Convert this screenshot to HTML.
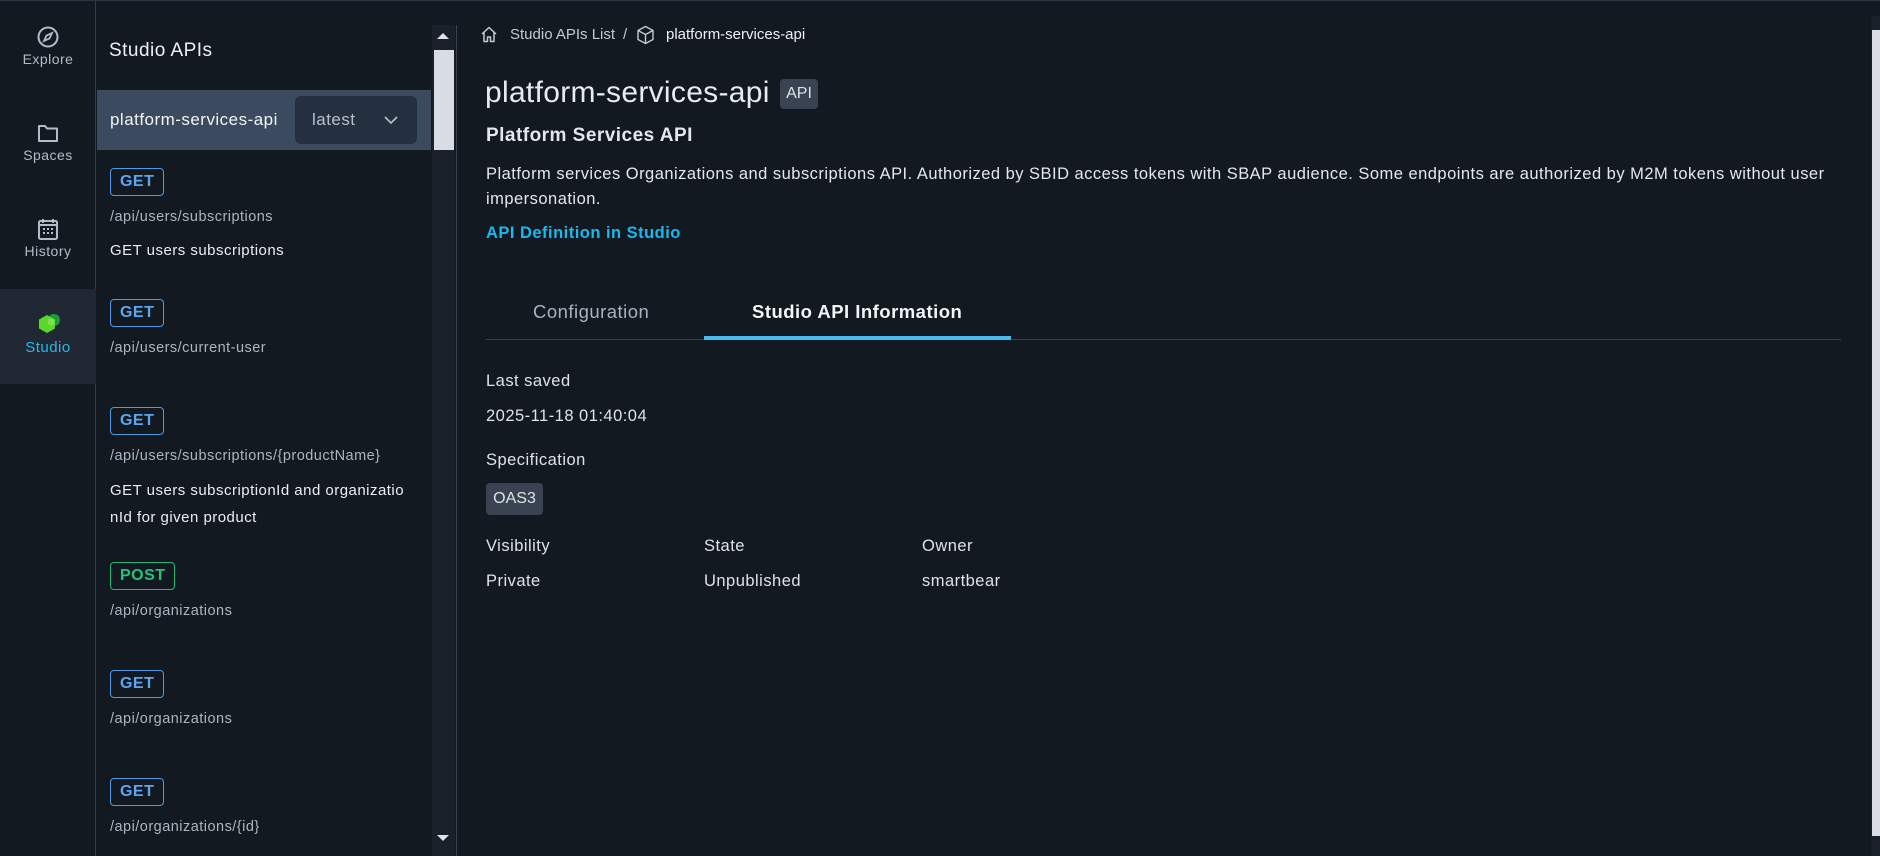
<!DOCTYPE html>
<html><head><meta charset="utf-8"><style>
*{box-sizing:border-box;margin:0;padding:0}
body{width:1880px;height:856px;overflow:hidden;background:#131920;font-family:"Liberation Sans",sans-serif;color:#e4e7eb;position:relative;letter-spacing:0.03em}
.a{position:absolute;white-space:nowrap}
.nav{left:0;top:1px;width:96px;height:855px;border-right:1px solid #343c47}
.ni{position:absolute;left:0;width:96px;text-align:center;font-size:14px;color:#b4bcc8}
.badge{position:absolute;left:110px;height:28px;border:1.5px solid #4d9be6;border-radius:4px;color:#5ba6ef;font-weight:bold;font-size:16px;line-height:25px;padding:0 9px}
.path{position:absolute;left:110px;font-size:14.5px;color:#aeb5bf}
.desc{position:absolute;left:110px;font-size:15px;color:#eceef1;line-height:27px}
.lbl{position:absolute;font-size:16.5px;color:#dfe3e8}
</style></head><body>
<div class="a" style="left:0;top:0;width:1880px;height:1px;background:#2e3540"></div>
<div class="a nav"></div>
<svg class="a" style="left:37px;top:26px" width="22" height="22" viewBox="0 0 22 22"><circle cx="11" cy="11" r="9.5" fill="none" stroke="#b4bcc8" stroke-width="2"/><path d="M15 7 L12.5 12.5 L7 15 L9.5 9.5Z" fill="none" stroke="#b4bcc8" stroke-width="1.8"/></svg>
<div class="ni" style="top:51px">Explore</div>
<svg class="a" style="left:37px;top:123px" width="22" height="20" viewBox="0 0 22 20"><path d="M2 3 H8 L10 5.5 H20 V18 H2Z" fill="none" stroke="#b4bcc8" stroke-width="2" stroke-linejoin="round"/></svg>
<div class="ni" style="top:147px">Spaces</div>
<svg class="a" style="left:38px;top:218px" width="20" height="22" viewBox="0 0 20 22"><rect x="1" y="3" width="18" height="18" rx="1.5" fill="none" stroke="#b4bcc8" stroke-width="2"/><path d="M5 1v4M15 1v4M1 7h18" stroke="#b4bcc8" stroke-width="2"/><g fill="#b4bcc8"><rect x="5" y="10" width="2" height="2"/><rect x="9" y="10" width="2" height="2"/><rect x="13" y="10" width="2" height="2"/><rect x="5" y="14" width="2" height="2"/><rect x="9" y="14" width="2" height="2"/><rect x="13" y="14" width="2" height="2"/></g></svg>
<div class="ni" style="top:243px">History</div>
<div class="a" style="left:0;top:289px;width:96px;height:95px;background:#1f2833"></div>
<svg class="a" style="left:35px;top:312px" width="26" height="26" viewBox="0 0 26 26"><circle cx="19" cy="8" r="6" fill="#1a9c3a"/><path d="M12 3 L20 7.5 V16.5 L12 21 L4 16.5 V7.5Z" fill="#5bd62a"/><circle cx="16" cy="10" r="3.5" fill="#8fe65a" opacity=".7"/></svg>
<div class="ni" style="top:339px;color:#2cb5ee;font-size:15px">Studio</div>

<div class="a" style="left:109px;top:40px;font-size:19px;color:#eef0f3">Studio APIs</div>
<div class="a" style="left:97px;top:90px;width:334px;height:60px;background:#3b4a5f"></div>
<div class="a" style="left:110px;top:110px;font-size:17px;color:#f2f4f6">platform-services-api</div>
<div class="a" style="left:295px;top:96px;width:122px;height:48px;background:#243040;border-radius:6px"></div>
<div class="a" style="left:312px;top:110px;font-size:17px;color:#b8c0cb">latest</div>
<svg class="a" style="left:384px;top:115px" width="14" height="10" viewBox="0 0 14 10"><path d="M1 2 L7 8 L13 2" fill="none" stroke="#b8c0cb" stroke-width="1.6"/></svg>
<div class="a" style="left:432px;top:25px;width:23px;height:831px;background:#1a2029"></div>
<div class="a" style="left:434px;top:50px;width:20px;height:100px;background:#d9dde3"></div>
<div class="a" style="left:437px;top:33px;width:0;height:0;border-left:6px solid transparent;border-right:6px solid transparent;border-bottom:6px solid #e0e3e7"></div>
<div class="a" style="left:437px;top:835px;width:0;height:0;border-left:6px solid transparent;border-right:6px solid transparent;border-top:6px solid #e0e3e7"></div>
<div class="a" style="left:456px;top:25px;width:1px;height:831px;background:#3a424d"></div>

<div class="badge" style="top:168px">GET</div>
<div class="path" style="top:209px">/api/users/subscriptions</div>
<div class="desc" style="top:237px">GET users subscriptions</div>
<div class="badge" style="top:299px">GET</div>
<div class="path" style="top:340px">/api/users/current-user</div>
<div class="badge" style="top:407px">GET</div>
<div class="path" style="top:448px">/api/users/subscriptions/{productName}</div>
<div class="desc" style="top:477px">GET users subscriptionId and organizatio<br>nId for given product</div>
<div class="badge" style="top:562px;border-color:#21b875;color:#22c47d">POST</div>
<div class="path" style="top:603px">/api/organizations</div>
<div class="badge" style="top:670px">GET</div>
<div class="path" style="top:711px">/api/organizations</div>
<div class="badge" style="top:778px">GET</div>
<div class="path" style="top:819px">/api/organizations/{id}</div>

<svg class="a" style="left:480px;top:26px" width="18" height="17" viewBox="0 0 18 17"><path d="M2 8 L9 1.5 L16 8 M4 6.5 V15.5 H7.5 V11 H10.5 V15.5 H14 V6.5" fill="none" stroke="#c4cad3" stroke-width="1.5" stroke-linejoin="round"/></svg>
<div class="a" style="left:510px;top:26px;font-size:15px;color:#c4cad3;letter-spacing:0">Studio APIs List</div>
<div class="a" style="left:623px;top:26px;font-size:15px;color:#c4cad3">/</div>
<svg class="a" style="left:636px;top:25px" width="19" height="20" viewBox="0 0 19 20"><path d="M9.5 1.5 L17 5.5 V14.5 L9.5 18.5 L2 14.5 V5.5Z M2 5.5 L9.5 9.5 L17 5.5 M9.5 9.5 V18.5" fill="none" stroke="#c4cad3" stroke-width="1.4" stroke-linejoin="round"/></svg>
<div class="a" style="left:666px;top:26px;font-size:15px;color:#eef0f3;letter-spacing:0">platform-services-api</div>

<div class="a" style="left:485px;top:76px;font-size:30px;color:#e8ebef;letter-spacing:0.01em">platform-services-api</div>
<div class="a" style="left:780px;top:79px;width:38px;height:30px;background:#3a4351;border-radius:4px;font-size:16px;line-height:30px;text-align:center;color:#dfe3e8;letter-spacing:0">API</div>
<div class="a" style="left:486px;top:125px;font-size:19px;font-weight:bold;color:#e4e7eb">Platform Services API</div>
<div class="a" style="left:486px;top:162px;font-size:16.5px;line-height:25px;color:#e4e7eb">Platform services Organizations and subscriptions API. Authorized by SBID access tokens with SBAP audience. Some endpoints are authorized by M2M tokens without user<br>impersonation.</div>
<div class="a" style="left:486px;top:224px;font-size:16.5px;font-weight:bold;color:#1ab8ed">API Definition in Studio</div>

<div class="a" style="left:486px;top:339px;width:1355px;height:1px;background:#3a4350"></div>
<div class="a" style="left:533px;top:301px;font-size:18.5px;color:#aab2bd">Configuration</div>
<div class="a" style="left:752px;top:301px;font-size:18.5px;font-weight:bold;color:#f2f4f6">Studio API Information</div>
<div class="a" style="left:704px;top:336px;width:307px;height:4px;background:#4db8f0"></div>

<div class="lbl" style="left:486px;top:372px">Last saved</div>
<div class="lbl" style="left:486px;top:407px">2025-11-18 01:40:04</div>
<div class="lbl" style="left:486px;top:451px">Specification</div>
<div class="a" style="left:486px;top:483px;width:57px;height:32px;background:#3a4351;border-radius:4px;font-size:16px;line-height:32px;text-align:center;color:#dfe3e8;letter-spacing:0">OAS3</div>
<div class="lbl" style="left:486px;top:537px">Visibility</div>
<div class="lbl" style="left:704px;top:537px">State</div>
<div class="lbl" style="left:922px;top:537px">Owner</div>
<div class="lbl" style="left:486px;top:572px">Private</div>
<div class="lbl" style="left:704px;top:572px">Unpublished</div>
<div class="lbl" style="left:922px;top:572px">smartbear</div>

<div class="a" style="left:1871px;top:16px;width:9px;height:840px;background:#1a2029"></div>
<div class="a" style="left:1872px;top:30px;width:8px;height:806px;background:#d9dde3"></div>
</body></html>
